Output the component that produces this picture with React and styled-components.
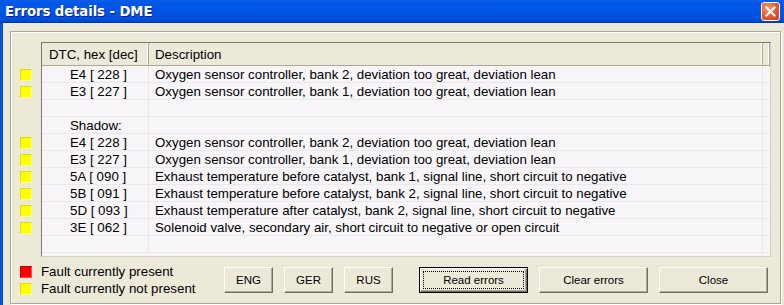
import React from 'react';
import styled, { createGlobalStyle } from 'styled-components';

const GlobalStyle = createGlobalStyle`
  html, body {
    margin: 0;
    padding: 0;
    background: #ece9d8;
  }
  * { box-sizing: border-box; }
`;

const Window = styled.div`
  width: 784px;
  height: 305px;
  display: flex;
  flex-direction: column;
  background: #ece9d8;
  font-family: "Liberation Sans", Arial, sans-serif;
  font-size: 13.3px;
  color: #000;
  overflow: hidden;
`;

const TitleBar = styled.div`
  height: 23px;
  flex: none;
  display: flex;
  align-items: center;
  justify-content: space-between;
  padding: 0 4px 0 5px;
  background: linear-gradient(180deg, #0a5ee8 0%, #0058e6 15%, #0055e5 50%, #0051dd 85%, #0047c6 100%);
  border-bottom: 1px solid #0038a8;
`;

const Title = styled.div`
  color: #fff;
  font-family: "DejaVu Sans", "Liberation Sans", sans-serif;
  font-weight: bold;
  font-size: 13.3px;
  letter-spacing: -0.1px;
  text-shadow: 1px 1px 0 #0a1e8c;
`;

const CloseButton = styled.div`
  width: 19px;
  height: 19px;
  border: 1px solid #fff;
  border-radius: 3px;
  background: radial-gradient(circle at 35% 30%, #f39a7c 0%, #e2582e 55%, #c8401a 100%);
  display: flex;
  align-items: center;
  justify-content: center;
`;

const Body = styled.div`
  flex: 1;
  display: flex;
  border-left: 3px solid #0a4fd8;
  padding: 8px 6px 4px 7px;
`;

const GroupBox = styled.div`
  flex: 1;
  display: flex;
  flex-direction: column;
  border: 1px solid #aca899;
  box-shadow: inset 1px 1px 0 #fff, 1px 1px 0 #fff;
  padding: 10px 9px 6px 9px;
`;

const ListArea = styled.div`
  display: flex;
  height: 215px;
`;

const Indicators = styled.div`
  width: 21px;
  padding-top: 24px;
  display: flex;
  flex-direction: column;
`;

const IndicatorSlot = styled.div`
  height: 17px;
  display: flex;
  align-items: center;
`;

const Lamp = styled.div`
  width: 12px;
  height: 12px;
  flex: none;
  background: ${p => (p.$red ? '#ff0000' : '#ffff00')};
  border-top: 1px solid ${p => (p.$red ? '#c80000' : '#e0e000')};
  border-left: 1px solid ${p => (p.$red ? '#c80000' : '#e0e000')};
  border-right: 1px solid ${p => (p.$red ? '#ff5050' : '#ffff80')};
  border-bottom: 1px solid ${p => (p.$red ? '#ff5050' : '#ffff80')};
`;

const Table = styled.div`
  flex: 1;
  border: 1px solid #7a7a7a;
  border-right-color: #d4d0c8;
  border-bottom-color: #d4d0c8;
  background: #f7f5f8;
  display: flex;
  flex-direction: column;
  overflow: hidden;
`;

const Grid = styled.div`
  display: grid;
  grid-template-columns: 107px 614px 1fr;
`;

const HeadCell = styled.div`
  height: 23px;
  background: #ece9d8;
  border-right: 1px solid #aca899;
  box-shadow: inset -1px 0 0 #fff;
  border-bottom: 1px solid #aca899;
  display: flex;
  align-items: center;
  padding-left: ${p => p.$pad || 6}px;
  white-space: nowrap;
`;

const Cell = styled.div`
  height: 17px;
  display: flex;
  align-items: center;
  padding-left: ${p => p.$pad || 6}px;
  border-bottom: 1px solid #ebe8ec;
  border-right: ${p => (p.$last ? 'none' : '1px solid #ebe8ec')};
  white-space: nowrap;
`;

const Footer = styled.div`
  flex: 1;
  display: flex;
  align-items: center;
  padding-top: 6px;
`;

const Legend = styled.div`
  width: 204px;
  display: flex;
  flex-direction: column;
`;

const LegendRow = styled.div`
  height: 17px;
  display: flex;
  align-items: center;
  gap: 9px;
`;

const Buttons = styled.div`
  display: flex;
  gap: 11px;
`;

const Button = styled.button`
  width: ${p => p.$w}px;
  height: 26px;
  margin-right: ${p => p.$gap || 0}px;
  padding: 0;
  font-family: "Liberation Sans", Arial, sans-serif;
  font-size: 11.5px;
  color: #000;
  background: #ece9d8;
  border-style: solid;
  border-width: 1px;
  border-color: ${p => (p.$default ? '#000' : '#fff #716f64 #716f64 #fff')};
  box-shadow: ${p =>
    p.$default
      ? 'inset 1px 1px 0 #fff, inset -1px -1px 0 #716f64, inset -2px -2px 0 #aca899'
      : 'inset -1px -1px 0 #aca899'};
  display: flex;
  align-items: center;
  justify-content: center;
  position: relative;
`;

const FocusRing = styled.span`
  position: absolute;
  inset: 3px;
  border: 1px dotted #000;
`;

const rows = [
  { lamp: true, code: 'E4 [ 228 ]', desc: 'Oxygen sensor controller, bank 2, deviation too great, deviation lean' },
  { lamp: true, code: 'E3 [ 227 ]', desc: 'Oxygen sensor controller, bank 1, deviation too great, deviation lean' },
  { lamp: false, code: '', desc: '' },
  { lamp: false, code: 'Shadow:', desc: '' },
  { lamp: true, code: 'E4 [ 228 ]', desc: 'Oxygen sensor controller, bank 2, deviation too great, deviation lean' },
  { lamp: true, code: 'E3 [ 227 ]', desc: 'Oxygen sensor controller, bank 1, deviation too great, deviation lean' },
  { lamp: true, code: '5A [ 090 ]', desc: 'Exhaust temperature before catalyst, bank 1, signal line, short circuit to negative' },
  { lamp: true, code: '5B [ 091 ]', desc: 'Exhaust temperature before catalyst, bank 2, signal line, short circuit to negative' },
  { lamp: true, code: '5D [ 093 ]', desc: 'Exhaust temperature after catalyst, bank 2, signal line, short circuit to negative' },
  { lamp: true, code: '3E [ 062 ]', desc: 'Solenoid valve, secondary air, short circuit to negative or open circuit' },
  { lamp: false, code: '', desc: '' },
];

export default function App() {
  return (
    <>
      <GlobalStyle />
      <Window>
        <TitleBar>
          <Title>Errors details - DME</Title>
          <CloseButton>
            <svg width="11" height="11" viewBox="0 0 11 11">
              <path d="M1.5 1.5 L9.5 9.5 M9.5 1.5 L1.5 9.5" stroke="#fff" strokeWidth="2" strokeLinecap="square" />
            </svg>
          </CloseButton>
        </TitleBar>
        <Body>
          <GroupBox>
            <ListArea>
              <Indicators>
                {rows.map((r, i) => (
                  <IndicatorSlot key={i}>{r.lamp && <Lamp />}</IndicatorSlot>
                ))}
              </Indicators>
              <Table>
                <Grid>
                  <HeadCell $pad={7}>DTC, hex [dec]</HeadCell>
                  <HeadCell $pad={6}>Description</HeadCell>
                  <HeadCell />
                  {rows.map((r, i) => (
                    <React.Fragment key={i}>
                      <Cell $pad={28}>{r.code}</Cell>
                      <Cell $pad={6}>{r.desc}</Cell>
                      <Cell $last />
                    </React.Fragment>
                  ))}
                </Grid>
              </Table>
            </ListArea>
            <Footer>
              <Legend>
                <LegendRow><Lamp $red />Fault currently present</LegendRow>
                <LegendRow><Lamp />Fault currently not present</LegendRow>
              </Legend>
              <Buttons>
                <Button $w={49}>ENG</Button>
                <Button $w={49}>GER</Button>
                <Button $w={49} $gap={15}>RUS</Button>
                <Button $w={109} $default><FocusRing />Read errors</Button>
                <Button $w={109}>Clear errors</Button>
                <Button $w={109}>Close</Button>
              </Buttons>
            </Footer>
          </GroupBox>
        </Body>
      </Window>
    </>
  );
}
